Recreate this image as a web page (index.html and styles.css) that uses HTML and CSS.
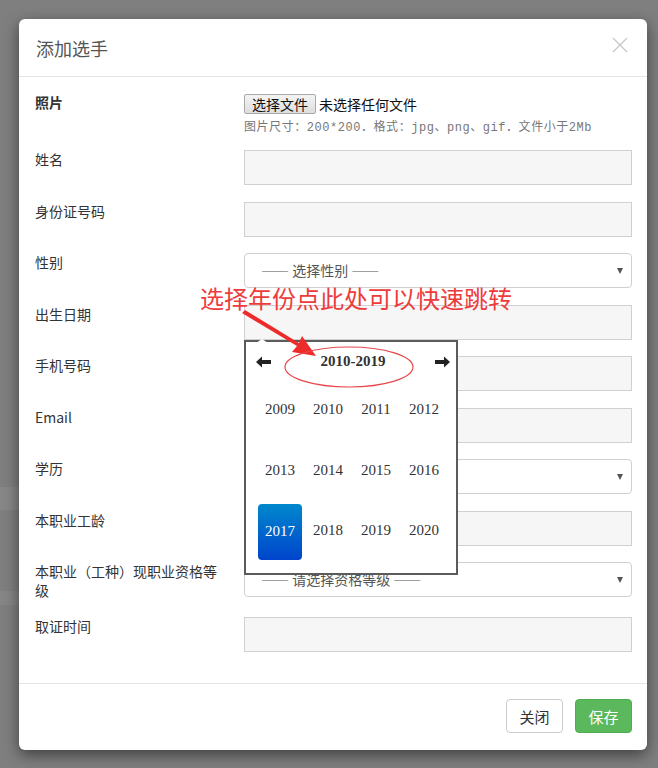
FILE: index.html
```html
<!DOCTYPE html>
<html lang="zh-CN">
<head>
    <meta charset="UTF-8">
    <meta name="viewport" content="width=device-width, initial-scale=1.0">
    <link rel="stylesheet" href="styles.css">
</head>
<body>
    <div class="modal">
        <div class="modal-header">
            <h4 class="modal-title">添加选手</h4>
            <button class="close" type="button">
                <svg width="16" height="16" viewBox="0 0 16 16"><path d="M1 1L15 15M15 1L1 15" stroke="#c9c9c9" stroke-width="1.4" fill="none"/></svg>
            </button>
        </div>

        <div class="modal-body">
            <div class="form-row photo-row">
                <label class="control-label strong">照片</label>
                <div class="control">
                    <div class="file-line">
                        <span class="file-btn">选择文件</span>
                        <span class="file-name">未选择任何文件</span>
                    </div>
                    <p class="help">图片尺寸：200*200．格式：jpg、png、gif．文件小于2Mb</p>
                </div>
            </div>

            <div class="form-row">
                <label class="control-label">姓名</label>
                <div class="control"><div class="input"></div></div>
            </div>

            <div class="form-row">
                <label class="control-label">身份证号码</label>
                <div class="control"><div class="input"></div></div>
            </div>

            <div class="form-row">
                <label class="control-label">性别</label>
                <div class="control">
                    <div class="select"><span class="select-text">—— 选择性别 ——</span><span class="caret"></span></div>
                </div>
            </div>

            <div class="form-row">
                <label class="control-label">出生日期</label>
                <div class="control date-control">
                    <div class="input"></div>
                    <!-- year view of the date picker -->
                    <div class="datepicker">
                        <div class="dp-head">
                            <svg class="dp-arrow" width="16" height="12" viewBox="0 0 16 12"><path d="M0 6L6 0.5V4H15V8H6V11.5Z" fill="#222"/></svg>
                            <span class="dp-switch">2010-2019</span>
                            <svg class="dp-arrow" width="16" height="12" viewBox="0 0 16 12"><path d="M16 6L10 0.5V4H1V8H10V11.5Z" fill="#222"/></svg>
                        </div>
                        <div class="dp-years">
                            <span>2009</span><span>2010</span><span>2011</span><span>2012</span>
                            <span>2013</span><span>2014</span><span>2015</span><span>2016</span>
                            <span class="active">2017</span><span>2018</span><span>2019</span><span>2020</span>
                        </div>
                    </div>
                </div>
            </div>

            <div class="form-row">
                <label class="control-label">手机号码</label>
                <div class="control"><div class="input"></div></div>
            </div>

            <div class="form-row">
                <label class="control-label">Email</label>
                <div class="control"><div class="input"></div></div>
            </div>

            <div class="form-row">
                <label class="control-label">学历</label>
                <div class="control">
                    <div class="select"><span class="caret"></span></div>
                </div>
            </div>

            <div class="form-row">
                <label class="control-label">本职业工龄</label>
                <div class="control"><div class="input"></div></div>
            </div>

            <div class="form-row">
                <label class="control-label">本职业（工种）现职业资格等级</label>
                <div class="control">
                    <div class="select"><span class="select-text">—— 请选择资格等级 ——</span><span class="caret"></span></div>
                </div>
            </div>

            <div class="form-row">
                <label class="control-label">取证时间</label>
                <div class="control"><div class="input"></div></div>
            </div>
        </div>

        <div class="modal-footer">
            <button class="btn btn-default" type="button">关闭</button>
            <button class="btn btn-success" type="button">保存</button>
        </div>
    </div>

    <!-- red annotation drawn over the screenshot -->
    <div class="tip">选择年份点此处可以快速跳转</div>
    <svg class="marks" width="658" height="768" viewBox="0 0 658 768">
        <polygon points="242,313 245,310 299,343 302,336 316,356 292,352 297,346" fill="#ee2b2b"/>
        <ellipse cx="349" cy="367" rx="64" ry="20" fill="none" stroke="#e8464a" stroke-width="1.2"/>
    </svg>
</body>
</html>
```

FILE: styles.css
```css
body {
    margin: 0;
    padding: 19px 0 0 19px;
    height: 749px;
    background-color: #7f7f7f;
    background-image:
        linear-gradient(#878787, #878787),
        linear-gradient(#868686, #868686);
    background-size: 19px 23px, 19px 14px;
    background-position: 0 487px, 0 591px;
    background-repeat: no-repeat;
    font-family: "Noto Sans CJK SC", "Liberation Sans", sans-serif;
    font-size: 14px;
    color: #333;
}

.modal {
    width: 628px;
    height: 731px;
    background: #fff;
    border-radius: 6px;
    box-shadow: 0 5px 15px rgba(0, 0, 0, 0.5);
    display: flex;
    flex-direction: column;
}

.modal-header {
    height: 58px;
    box-sizing: border-box;
    padding: 0 19px 0 17px;
    border-bottom: 1px solid #e5e5e5;
    display: flex;
    align-items: center;
    justify-content: space-between;
}

.modal-title {
    margin: 0;
    font-size: 18px;
    font-weight: normal;
    color: #555;
}

.close {
    border: 0;
    background: none;
    padding: 0;
    width: 16px;
    height: 16px;
    margin-top: -6px;
}

.close svg {
    display: block;
}

.modal-body {
    flex: 1;
    padding: 15px 15px 0 16px;
}

.form-row {
    display: grid;
    grid-template-columns: 194px 1fr;
    column-gap: 15px;
    align-items: start;
    margin-bottom: 16.5px;
}

.photo-row {
    margin-bottom: 13px;
}

.control-label {
    line-height: 19px;
    padding-top: 0;
    color: #333;
}

.control-label.strong {
    font-weight: bold;
    line-height: 20px;
}

.control {
    position: relative;
}

.file-line {
    margin-top: 2px;
    height: 20px;
    display: flex;
    align-items: center;
}

.file-btn {
    box-sizing: border-box;
    height: 20px;
    width: 72px;
    line-height: 18px;
    text-align: center;
    border: 1px solid #a9a9a9;
    border-radius: 2px;
    background: linear-gradient(#f4f4f4, #dedede);
    color: #111;
}

.file-name {
    margin-left: 3px;
    color: #111;
}

.help {
    margin: 6px 0 0;
    line-height: 17px;
    font-family: "Liberation Mono", "Noto Sans CJK SC", monospace;
    font-size: 12px;
    letter-spacing: 0.55px;
    color: #777;
    white-space: nowrap;
}

.input {
    height: 35px;
    box-sizing: border-box;
    border: 1px solid #d0d0d0;
    background: #f6f6f6;
}

.select {
    position: relative;
    height: 35px;
    box-sizing: border-box;
    border: 1px solid #d0d0d0;
    border-radius: 4px;
    background: #fff;
    padding-left: 16px;
    display: flex;
    align-items: center;
    color: #555;
}

.select-text {
    line-height: 18px;
    margin-top: -2px;
}

.caret {
    position: absolute;
    right: 8px;
    top: 14px;
    border-left: 3.5px solid transparent;
    border-right: 3.5px solid transparent;
    border-top: 6px solid #555;
}

/* date picker popup */
.datepicker {
    position: absolute;
    z-index: 10;
    top: 35px;
    left: 0;
    width: 214px;
    height: 235px;
    box-sizing: border-box;
    border: 2px solid #5b5b5b;
    background: #fff;
    padding: 5px 12px 0 12px;
}

.datepicker::before {
    content: "";
    position: absolute;
    top: -3px;
    left: 10px;
    border-left: 6px solid transparent;
    border-right: 6px solid transparent;
    border-bottom: 4px solid #fff;
}

.dp-head {
    height: 30px;
    display: flex;
    align-items: center;
    justify-content: space-between;
    margin: 0 -6px 4px -2px;
}

.dp-arrow {
    display: block;
}

.dp-switch {
    font-family: "Liberation Serif", serif;
    font-weight: bold;
    font-size: 15px;
    color: #333;
}

.dp-years {
    display: grid;
    grid-template-columns: repeat(4, 44px);
    grid-auto-rows: 58px;
    column-gap: 4px;
    row-gap: 2.5px;
    font-family: "Liberation Serif", serif;
    font-size: 15px;
    color: #333;
}

.dp-years span {
    display: flex;
    align-items: center;
    justify-content: center;
    border-radius: 4px;
}

.dp-years .active {
    background: linear-gradient(#0088cc, #0044cc);
    color: #fff;
    margin-top: 2px;
}

.modal-footer {
    height: 67px;
    box-sizing: border-box;
    border-top: 1px solid #e5e5e5;
    padding: 15px 15px 0 0;
    display: flex;
    justify-content: flex-end;
    gap: 12px;
}

.btn {
    width: 57px;
    height: 34px;
    border-radius: 4px;
    font-family: "Noto Sans CJK SC", sans-serif;
    font-size: 15px;
    padding: 0;
}

.btn-default {
    background: #fff;
    border: 1px solid #ccc;
    color: #333;
}

.btn-success {
    background: #5cb85c;
    border: 1px solid #4cae4c;
    color: #fff;
}

/* annotation layer */
.tip {
    position: absolute;
    z-index: 20;
    top: 286px;
    left: 200px;
    font-size: 24px;
    line-height: 24px;
    color: #ee3b3b;
    white-space: nowrap;
}

.marks {
    position: absolute;
    z-index: 20;
    top: 0;
    left: 0;
    pointer-events: none;
}
```
